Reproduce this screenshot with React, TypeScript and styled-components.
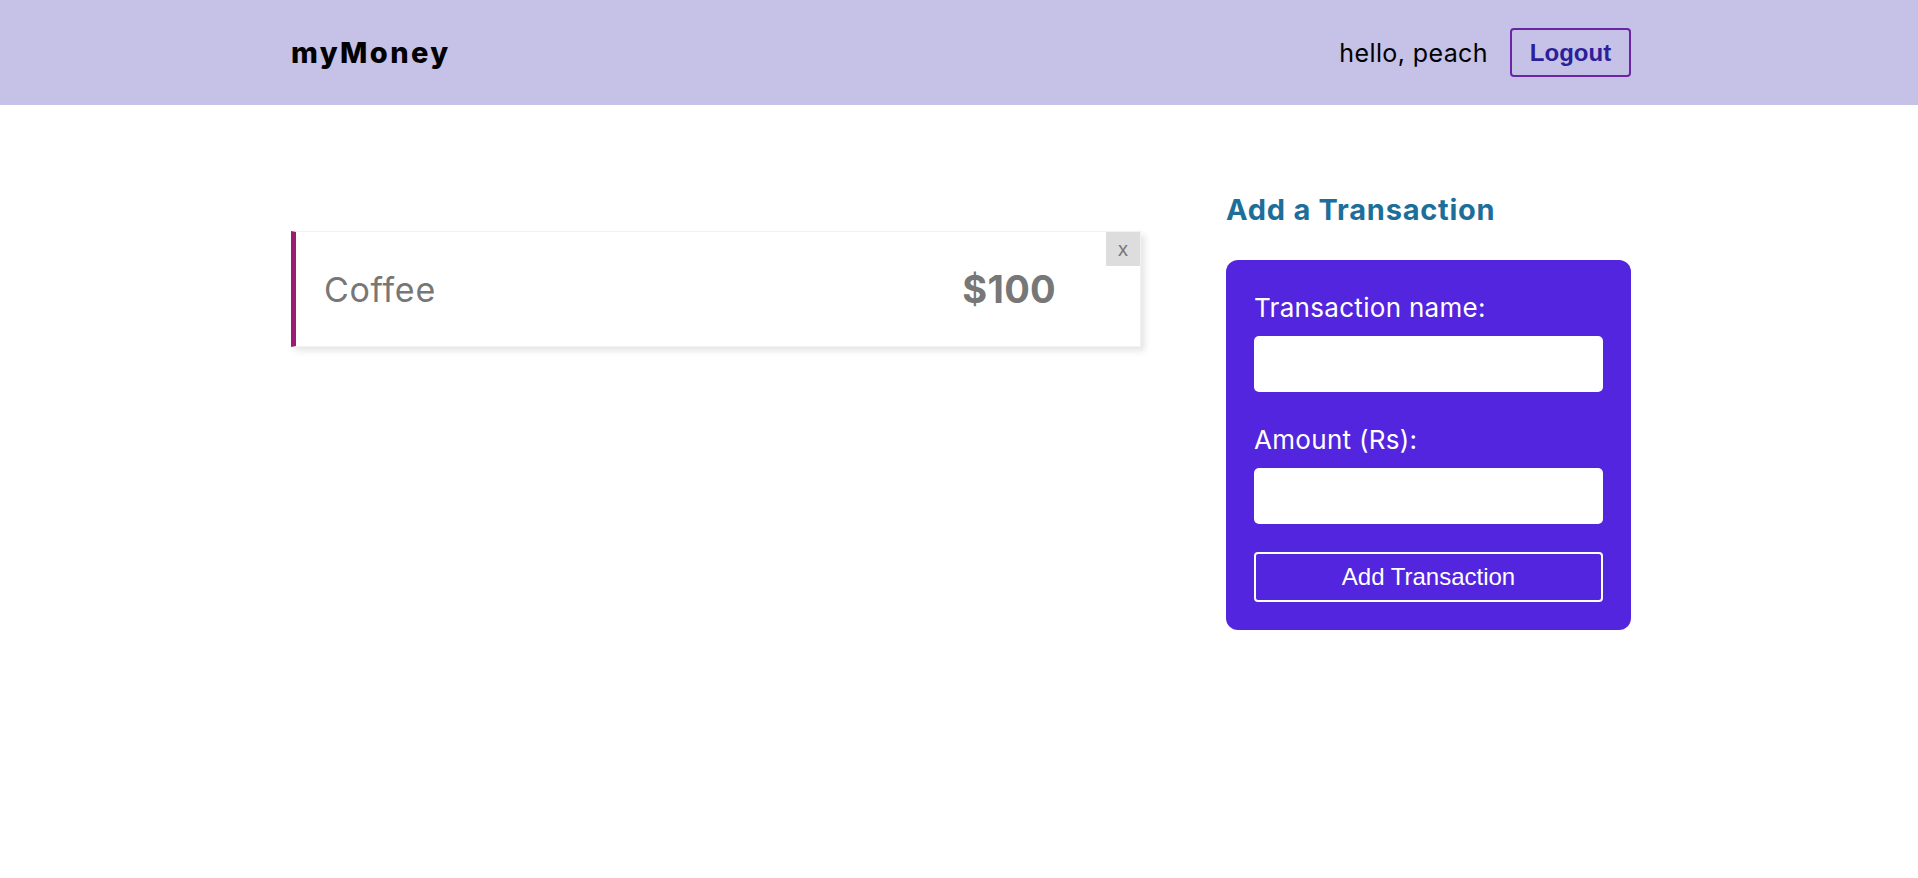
import * as React from 'react';
import styled, { createGlobalStyle } from 'styled-components';

const GlobalStyle = createGlobalStyle`
  html, body { margin: 0; padding: 0; background: #fff; }
  body { font-family: Inter, "Noto Sans", sans-serif; color: #333; }
  * { box-sizing: border-box; }
`;

type Tx = { id: string; name: string; amount: number };

const transactions: Tx[] = [{ id: '1', name: 'Coffee', amount: 100 }];

const App: React.FC = () => {
  const [name, setName] = React.useState('');
  const [amount, setAmount] = React.useState('');

  return (
    <>
      <GlobalStyle />
      <Navbar>
        <NavInner>
          <Logo>myMoney</Logo>
          <NavRight>
            <Greeting>hello, peach</Greeting>
            <LogoutButton>Logout</LogoutButton>
          </NavRight>
        </NavInner>
      </Navbar>

      <Page>
        <Container>
          <Content>
            <TxList>
              {transactions.map((t) => (
                <TxItem key={t.id}>
                  <TxName>{t.name}</TxName>
                  <TxAmount>${t.amount}</TxAmount>
                  <DeleteButton>x</DeleteButton>
                </TxItem>
              ))}
            </TxList>
          </Content>

          <Sidebar>
            <SideTitle>Add a Transaction</SideTitle>
            <Form onSubmit={(e) => e.preventDefault()}>
              <Field>
                <LabelText>Transaction name:</LabelText>
                <Input type="text" value={name} onChange={(e) => setName(e.target.value)} />
              </Field>
              <Field>
                <LabelText>Amount (Rs):</LabelText>
                <Input type="number" value={amount} onChange={(e) => setAmount(e.target.value)} />
              </Field>
              <SubmitButton type="submit">Add Transaction</SubmitButton>
            </Form>
          </Sidebar>
        </Container>
      </Page>
    </>
  );
};

export default App;

/* ===== Navbar ===== */

const Navbar = styled.nav`
  width: 100%;
  height: 105px;
  padding-left: 4px;
  background: #c6c1e7;
`;

const NavInner = styled.div`
  max-width: 1340px;
  height: 100%;
  margin: 0 auto;
  display: flex;
  align-items: center;
  justify-content: space-between;
`;

const Logo = styled.div`
  font-size: 29px;
  font-weight: 800;
  color: #000;
  letter-spacing: 2.4px;
`;

const NavRight = styled.div`
  display: flex;
  align-items: center;
  gap: 22px;
`;

const Greeting = styled.span`
  font-size: 25px;
  color: #000;
  letter-spacing: 0.4px;
`;

const LogoutButton = styled.button`
  width: 121px;
  height: 49px;
  border: 2px solid #6a26a2;
  border-radius: 4px;
  background: transparent;
  color: #2c1f9b;
  font-family: "Liberation Sans", Arial, sans-serif;
  font-weight: 700;
  font-size: 24px;
  cursor: pointer;
`;

/* ===== Layout ===== */

const Page = styled.div`
  padding-left: 4px;
`;

const Container = styled.main`
  max-width: 1340px;
  margin: 85px auto 0;
  display: grid;
  grid-template-columns: 1fr 405px;
  gap: 85px;
  align-items: start;
`;

const Content = styled.section`
  padding-top: 41px;
`;

const Sidebar = styled.aside``;

/* ===== Transactions ===== */

const TxList = styled.ul`
  list-style: none;
  margin: 0;
  padding: 0;
`;

const TxItem = styled.li`
  position: relative;
  height: 116px;
  display: flex;
  align-items: center;
  padding: 0 25px;
  border: 1px solid #f2f2f2;
  border-left: 5px solid #9b1c70;
  box-shadow: 4px 4px 6px rgba(50, 50, 50, 0.12);
`;

const TxName = styled.span`
  color: #777;
  font-size: 34px;
  padding-left: 3px;
  letter-spacing: 0.7px;
`;

const TxAmount = styled.span`
  margin-left: auto;
  margin-right: 59px;
  color: #777;
  font-size: 38px;
  font-weight: 700;
  letter-spacing: 0.3px;
`;

const DeleteButton = styled.button`
  position: absolute;
  top: 0;
  right: 0;
  width: 34px;
  height: 34px;
  padding: 0;
  border: none;
  background: #ddd;
  color: #777;
  font-family: "Liberation Sans", Arial, sans-serif;
  font-size: 20px;
  line-height: 30px;
  cursor: pointer;
`;

/* ===== Form ===== */

const SideTitle = styled.h3`
  margin: 0 0 30px;
  font-size: 29px;
  line-height: 40px;
  font-weight: 700;
  color: #1d6e99;
  letter-spacing: 0.75px;
`;

const Form = styled.form`
  padding: 28px;
  background: #5325de;
  border-radius: 12px;
  display: flex;
  flex-direction: column;
`;

const Field = styled.label`
  display: block;
  margin-bottom: 28px;
`;

const LabelText = styled.span`
  display: block;
  font-size: 26px;
  line-height: 40px;
  color: #fff;
  margin-bottom: 8px;
  letter-spacing: 0.3px;
`;

const Input = styled.input`
  display: block;
  width: 100%;
  height: 56px;
  border: none;
  border-radius: 5px;
  background: #fff;
  padding: 0 12px;
  font-size: 22px;
  font-family: inherit;
  outline: none;
`;

const SubmitButton = styled.button`
  width: 100%;
  height: 50px;
  border: 2px solid #fff;
  border-radius: 4px;
  background: transparent;
  color: #fff;
  font-family: "Liberation Sans", Arial, sans-serif;
  font-size: 24px;
  cursor: pointer;
`;
